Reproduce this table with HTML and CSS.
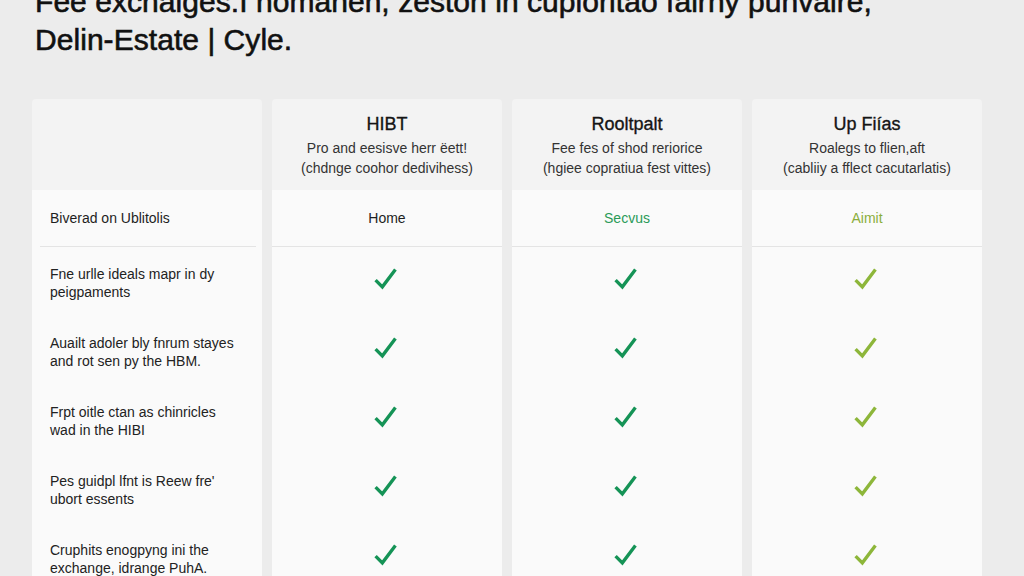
FILE: index.html
```html
<!DOCTYPE html>
<html lang="en">
<head>
<meta charset="utf-8">
<title>Fee exchanges</title>
<link rel="stylesheet" href="styles.css">
</head>
<body>
<h1 class="title">Fee exchaiges:I nomanen, zeston in cupioritao fairny punvaire,<br>Delin-Estate | Cyle.</h1>
<div class="table">
  <div class="cell head first top"></div>
  <div class="cell head top"><div class="name">HIBT</div><div class="sub">Pro and eesisve herr ëett!<br>(chdnge coohor dedivihess)</div></div>
  <div class="cell head top"><div class="name">Rooltpalt</div><div class="sub">Fee fes of shod reriorice<br>(hgiee copratiua fest vittes)</div></div>
  <div class="cell head top"><div class="name">Up Fiías</div><div class="sub">Roalegs to flien,aft<br>(cabliiy a fflect cacutarlatis)</div></div>

  <div class="cell sect first"><span>Biverad on Ublitolis</span></div>
  <div class="cell sect mid"><span>Home</span></div>
  <div class="cell sect mid"><span class="green">Secvus</span></div>
  <div class="cell sect mid"><span class="lime">Aimit</span></div>

  <div class="cell label">Fne urlle ideals mapr in dy<br>peigpaments</div>
  <div class="cell chk"><svg class="ck g" viewBox="0 0 22 22"><path d="M1.5 12.5 L8 19 L20.5 2.5"/></svg></div>
  <div class="cell chk"><svg class="ck g" viewBox="0 0 22 22"><path d="M1.5 12.5 L8 19 L20.5 2.5"/></svg></div>
  <div class="cell chk"><svg class="ck l" viewBox="0 0 22 22"><path d="M1.5 12.5 L8 19 L20.5 2.5"/></svg></div>

  <div class="cell label">Auailt adoler bly fnrum stayes<br>and rot sen py the HBM.</div>
  <div class="cell chk"><svg class="ck g" viewBox="0 0 22 22"><path d="M1.5 12.5 L8 19 L20.5 2.5"/></svg></div>
  <div class="cell chk"><svg class="ck g" viewBox="0 0 22 22"><path d="M1.5 12.5 L8 19 L20.5 2.5"/></svg></div>
  <div class="cell chk"><svg class="ck l" viewBox="0 0 22 22"><path d="M1.5 12.5 L8 19 L20.5 2.5"/></svg></div>

  <div class="cell label">Frpt oitle ctan as chinricles<br>wad in the HIBI</div>
  <div class="cell chk"><svg class="ck g" viewBox="0 0 22 22"><path d="M1.5 12.5 L8 19 L20.5 2.5"/></svg></div>
  <div class="cell chk"><svg class="ck g" viewBox="0 0 22 22"><path d="M1.5 12.5 L8 19 L20.5 2.5"/></svg></div>
  <div class="cell chk"><svg class="ck l" viewBox="0 0 22 22"><path d="M1.5 12.5 L8 19 L20.5 2.5"/></svg></div>

  <div class="cell label">Pes guidpl lfnt is Reew fre'<br>ubort essents</div>
  <div class="cell chk"><svg class="ck g" viewBox="0 0 22 22"><path d="M1.5 12.5 L8 19 L20.5 2.5"/></svg></div>
  <div class="cell chk"><svg class="ck g" viewBox="0 0 22 22"><path d="M1.5 12.5 L8 19 L20.5 2.5"/></svg></div>
  <div class="cell chk"><svg class="ck l" viewBox="0 0 22 22"><path d="M1.5 12.5 L8 19 L20.5 2.5"/></svg></div>

  <div class="cell label">Cruphits enogpyng ini the<br>exchange, idrange PuhA.</div>
  <div class="cell chk"><svg class="ck g" viewBox="0 0 22 22"><path d="M1.5 12.5 L8 19 L20.5 2.5"/></svg></div>
  <div class="cell chk"><svg class="ck g" viewBox="0 0 22 22"><path d="M1.5 12.5 L8 19 L20.5 2.5"/></svg></div>
  <div class="cell chk"><svg class="ck l" viewBox="0 0 22 22"><path d="M1.5 12.5 L8 19 L20.5 2.5"/></svg></div>
</div>
</body>
</html>
```
FILE: styles.css
```css
html, body {
  margin: 0;
  padding: 0;
  background: #ececec;
  font-family: "Liberation Sans", Arial, sans-serif;
  color: #1e1e1e;
  overflow: hidden;
  height: 576px;
}

.title {
  margin: -17px 0 0 35px;
  font-size: 30px;
  line-height: 38px;
  font-weight: normal;
  color: #111;
  -webkit-text-stroke: 0.6px #111;
  letter-spacing: 0.05px;
}

.table {
  margin: 40px 0 0 32px;
  display: grid;
  grid-template-columns: repeat(4, 230px);
  grid-template-rows: 91px 57px repeat(5, 69px);
  column-gap: 10px;
}

.cell {
  background: #fafafa;
  font-size: 14px;
  line-height: 18px;
}

.head {
  background: #f3f3f3;
  display: flex;
  flex-direction: column;
  align-items: center;
  justify-content: flex-start;
  padding-top: 15px;
  text-align: center;
}

.top {
  border-radius: 4px 4px 0 0;
}

.name {
  font-size: 18px;
  line-height: 20px;
  color: #151515;
  -webkit-text-stroke: 0.35px #151515;
  margin-bottom: 4px;
}

.sub {
  font-size: 14px;
  line-height: 20px;
  color: #333;
}

.sect {
  display: flex;
  align-items: center;
  padding-bottom: 1px;
  background: linear-gradient(#e4e4e4, #e4e4e4) no-repeat 0 100% / 100% 1px, #fafafa;
}

.sect.first {
  padding-left: 18px;
  background: linear-gradient(#e4e4e4, #e4e4e4) no-repeat 8px 100% / 216px 1px, #fafafa;
}

.sect.mid {
  justify-content: center;
}

.green { color: #2a9a58; }
.lime { color: #8aae3c; }

.label {
  display: flex;
  align-items: center;
  padding: 3px 0 0 18px;
  color: #222;
}

.chk {
  display: flex;
  align-items: center;
  justify-content: center;
  padding-bottom: 6px;
}

.ck {
  width: 23px;
  height: 23px;
  margin-right: 3px;
  fill: none;
  stroke-width: 3.2;
  stroke-linecap: butt;
  stroke-linejoin: miter;
}

.ck.g { stroke: #159356; }
.ck.l { stroke: #8db63a; }
```
